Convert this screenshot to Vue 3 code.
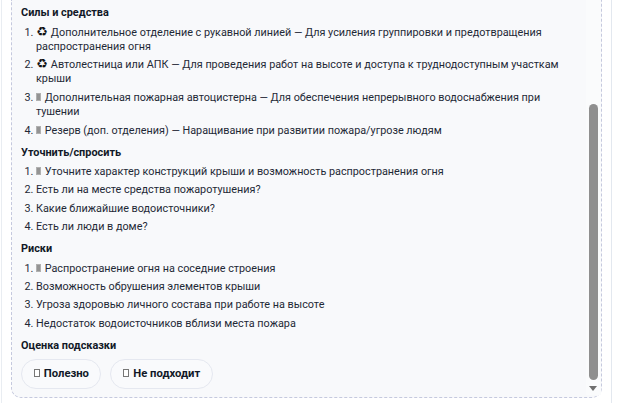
<script setup>
const sections = [
  {
    title: "Силы и средства",
    items: [
      { icon: "recycle", text: "Дополнительное отделение с рукавной линией — Для усиления группировки и предотвращения распространения огня" },
      { icon: "recycle", text: "Автолестница или АПК — Для проведения работ на высоте и доступа к труднодоступным участкам крыши" },
      { icon: "box", text: "Дополнительная пожарная автоцистерна — Для обеспечения непрерывного водоснабжения при тушении" },
      { icon: "box", text: "Резерв (доп. отделения) — Наращивание при развитии пожара/угрозе людям" },
    ],
  },
  {
    title: "Уточнить/спросить",
    items: [
      { icon: "box", text: "Уточните характер конструкций крыши и возможность распространения огня" },
      { text: "Есть ли на месте средства пожаротушения?" },
      { text: "Какие ближайшие водоисточники?" },
      { text: "Есть ли люди в доме?" },
    ],
  },
  {
    title: "Риски",
    items: [
      { icon: "box", text: "Распространение огня на соседние строения" },
      { text: "Возможность обрушения элементов крыши" },
      { text: "Угроза здоровью личного состава при работе на высоте" },
      { text: "Недостаток водоисточников вблизи места пожара" },
    ],
  },
];
</script>

<template>
  <div class="page">
    <div class="panel">
      <div class="content">
        <section v-for="s in sections" :key="s.title" class="section">
          <h4>{{ s.title }}</h4>
          <ol>
            <li v-for="item in s.items" :key="item.text">
              <span v-if="item.icon === 'recycle'" class="recycle">♻</span>
              <span v-else-if="item.icon === 'box'" class="tofu"></span>
              {{ item.text }}
            </li>
          </ol>
        </section>
        <h4>Оценка подсказки</h4>
        <div class="actions">
          <button><span class="tofu-empty"></span> Полезно</button>
          <button><span class="tofu-empty"></span> Не подходит</button>
        </div>
      </div>
      <div class="scrollbar">
        <div class="thumb"></div>
        <div class="arrow"></div>
      </div>
    </div>
  </div>
</template>

<style>
html,
body {
  background: #fff;
  overflow: hidden;
}
</style>

<style scoped>
.page {
  width: 611px;
  height: 403px;
  box-sizing: border-box;
  margin-left: 1px;
  padding: 0 9px 0 9px;
  overflow: hidden;
  border-left: 1px solid #e9edf2;
  border-right: 1px solid #e3e8ef;
  font-family: Roboto, "Noto Sans", sans-serif;
  color: #1f2937;
}
.panel {
  position: relative;
  height: 398px;
  box-sizing: border-box;
  border: 1px dashed #c5c9de;
  border-top: none;
  border-radius: 0 0 10px 10px;
  background: #f8f9fb;
}
.content {
  padding: 6px 0 0 9px;
}
h4 {
  margin: 0;
  font-size: 10.9px;
  line-height: 14px;
  font-weight: 700;
  color: #111827;
}
.section {
  margin-bottom: 7.7px;
}
ol {
  margin: 5.5px 0 0;
  padding: 0 25px 0 15px;
}
li {
  font-size: 10.82px;
  line-height: 14.3px;
  margin-bottom: 4.1px;
}
.recycle {
  font-family: "DejaVu Sans", sans-serif;
  font-size: 13px;
  line-height: 0;
  margin-right: 0.5px;
  color: #111;
}
.tofu {
  display: inline-block;
  box-sizing: border-box;
  width: 5px;
  height: 8px;
  margin-right: 1px;
  border: 1px solid #b0b0b0;
  background: #949494;
  vertical-align: 0;
}
.tofu-empty {
  display: inline-block;
  box-sizing: border-box;
  width: 6px;
  height: 8px;
  margin-right: 1.5px;
  border: 1px solid #777;
  background: #fff;
  vertical-align: 0;
}
.actions {
  display: flex;
  gap: 9px;
  margin-top: 6px;
}
button {
  height: 30px;
  padding: 0 11.5px;
  border: 1px solid #e5e8f0;
  border-radius: 15px;
  background: #f9fafc;
  font: 700 11.25px Roboto, sans-serif;
  color: #111827;
}
.scrollbar {
  position: absolute;
  top: 0;
  right: 0;
  bottom: 2px;
  width: 15px;
  background: #fafbfc;
}
.thumb {
  position: absolute;
  top: 104px;
  left: 3px;
  width: 9px;
  height: 276px;
  border-radius: 5px;
  background: #8f8f8f;
}
.arrow {
  position: absolute;
  top: 386px;
  left: 3px;
  border-left: 4.5px solid transparent;
  border-right: 4.5px solid transparent;
  border-top: 5px solid #6f6f6f;
}
</style>
